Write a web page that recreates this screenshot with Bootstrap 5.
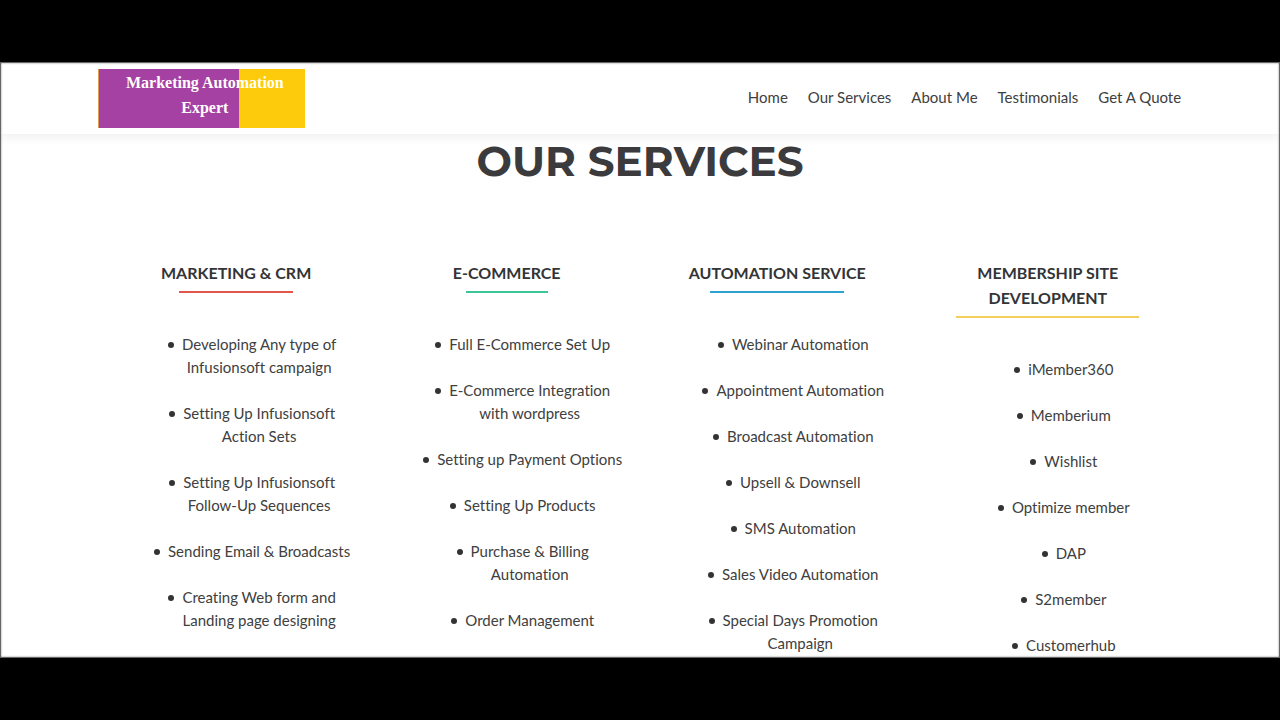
<!DOCTYPE html>
<html lang="en">
<head>
<meta charset="utf-8">
<meta name="viewport" content="width=device-width, initial-scale=1">
<title>Marketing Automation Expert</title>
<link href="https://cdn.jsdelivr.net/npm/bootstrap@5.3.0/dist/css/bootstrap.min.css" rel="stylesheet">
<style>
  body { font-family: Lato, "Liberation Sans", sans-serif; font-size: 15px; font-variant-ligatures: none; color: #404040; background: #000; }
  .stage { padding: 62px 0; }
  .frame { background: #fff; border: 1px solid #666; box-shadow: inset 0 0 2px #777; min-height: 0; }
  .wrap { width: 85%; margin: 0 auto; }
  .site-header { height: 71px; box-shadow: 0 3px 10px rgba(0, 0, 0, .07); flex: none; }
  .brand { width: 207px; height: 59px; margin-left: 1px; padding: 1px 14px 0 20px; color: #fff; text-decoration: none;
    font: bold 16px/25px "Liberation Serif", serif; border-left: 1px solid #e29a55;
    background: linear-gradient(90deg, #a541a2 68%, #fdca0c 68%); }
  .menu { gap: 20px; padding: 0 2px 3px 0; }
  .menu a { color: #404040; text-decoration: none; padding: 0; }
  .section-title { font: 700 42px/52px Montserrat, "Liberation Sans", sans-serif; color: #3b3b3d; margin: 1px 0 73px; }
  .services { padding-left: 4px; }
  .service { padding: 0 15px; }
  .service-title { font-size: 16px; line-height: 25px; font-weight: 700; color: #333436; margin: 0 0 40px; }
  .service-title::after { content: ""; display: block; width: 76%; height: 2px; margin: 6px auto 0; background: var(--accent); }
  .red { --accent: #e0564b; } .green { --accent: #3cc698; } .blue { --accent: #2fa3cf; } .gold { --accent: #f3d05c; }
  .service ul { list-style: none; padding: 0 2px 0 48px; margin: 0; line-height: 23px; }
  .service li { margin-bottom: 23px; }
  .service li::before { content: ""; display: inline-block; width: 6px; height: 6px; border-radius: 50%; background: #333;
    margin: 0 8px 0 -14px; vertical-align: 2px; }
</style>
</head>
<body>
<div class="stage vh-100 d-flex flex-column">
  <div class="frame flex-fill overflow-hidden">
    <header class="site-header">
      <div class="wrap h-100 d-flex align-items-center justify-content-between">
        <a class="brand d-block text-center" href="#">Marketing Automation Expert</a>
        <nav aria-label="Main">
          <ul class="menu nav">
            <li><a class="nav-link" href="#home">Home</a></li>
            <li><a class="nav-link" href="#services">Our Services</a></li>
            <li><a class="nav-link" href="#about">About Me</a></li>
            <li><a class="nav-link" href="#testimonials">Testimonials</a></li>
            <li><a class="nav-link" href="#quote">Get A Quote</a></li>
          </ul>
        </nav>
      </div>
    </header>
    <main id="services" class="wrap text-center">
      <h1 class="section-title">OUR SERVICES</h1>
      <div class="services">
        <div class="row g-0">
          <section class="service col-3">
            <h2 class="service-title red d-inline-block">MARKETING &amp; CRM</h2>
            <ul>
              <li>Developing Any type of Infusionsoft campaign</li>
              <li>Setting Up Infusionsoft Action Sets</li>
              <li>Setting Up Infusionsoft Follow-Up Sequences</li>
              <li>Sending Email &amp; Broadcasts</li>
              <li>Creating Web form and Landing page designing</li>
            </ul>
          </section>
          <section class="service col-3">
            <h2 class="service-title green d-inline-block">E-COMMERCE</h2>
            <ul>
              <li>Full E-Commerce Set Up</li>
              <li>E-Commerce Integration with wordpress</li>
              <li>Setting up Payment Options</li>
              <li>Setting Up Products</li>
              <li>Purchase &amp; Billing Automation</li>
              <li>Order Management</li>
            </ul>
          </section>
          <section class="service col-3">
            <h2 class="service-title blue d-inline-block">AUTOMATION SERVICE</h2>
            <ul>
              <li>Webinar Automation</li>
              <li>Appointment Automation</li>
              <li>Broadcast Automation</li>
              <li>Upsell &amp; Downsell</li>
              <li>SMS Automation</li>
              <li>Sales Video Automation</li>
              <li>Special Days Promotion Campaign</li>
            </ul>
          </section>
          <section class="service col-3">
            <h2 class="service-title gold d-inline-block">MEMBERSHIP SITE DEVELOPMENT</h2>
            <ul>
              <li>iMember360</li>
              <li>Memberium</li>
              <li>Wishlist</li>
              <li>Optimize member</li>
              <li>DAP</li>
              <li>S2member</li>
              <li>Customerhub</li>
            </ul>
          </section>
        </div>
      </div>
    </main>
  </div>
</div>
<script src="https://cdn.jsdelivr.net/npm/bootstrap@5.3.0/dist/js/bootstrap.bundle.min.js"></script>
</body>
</html>
